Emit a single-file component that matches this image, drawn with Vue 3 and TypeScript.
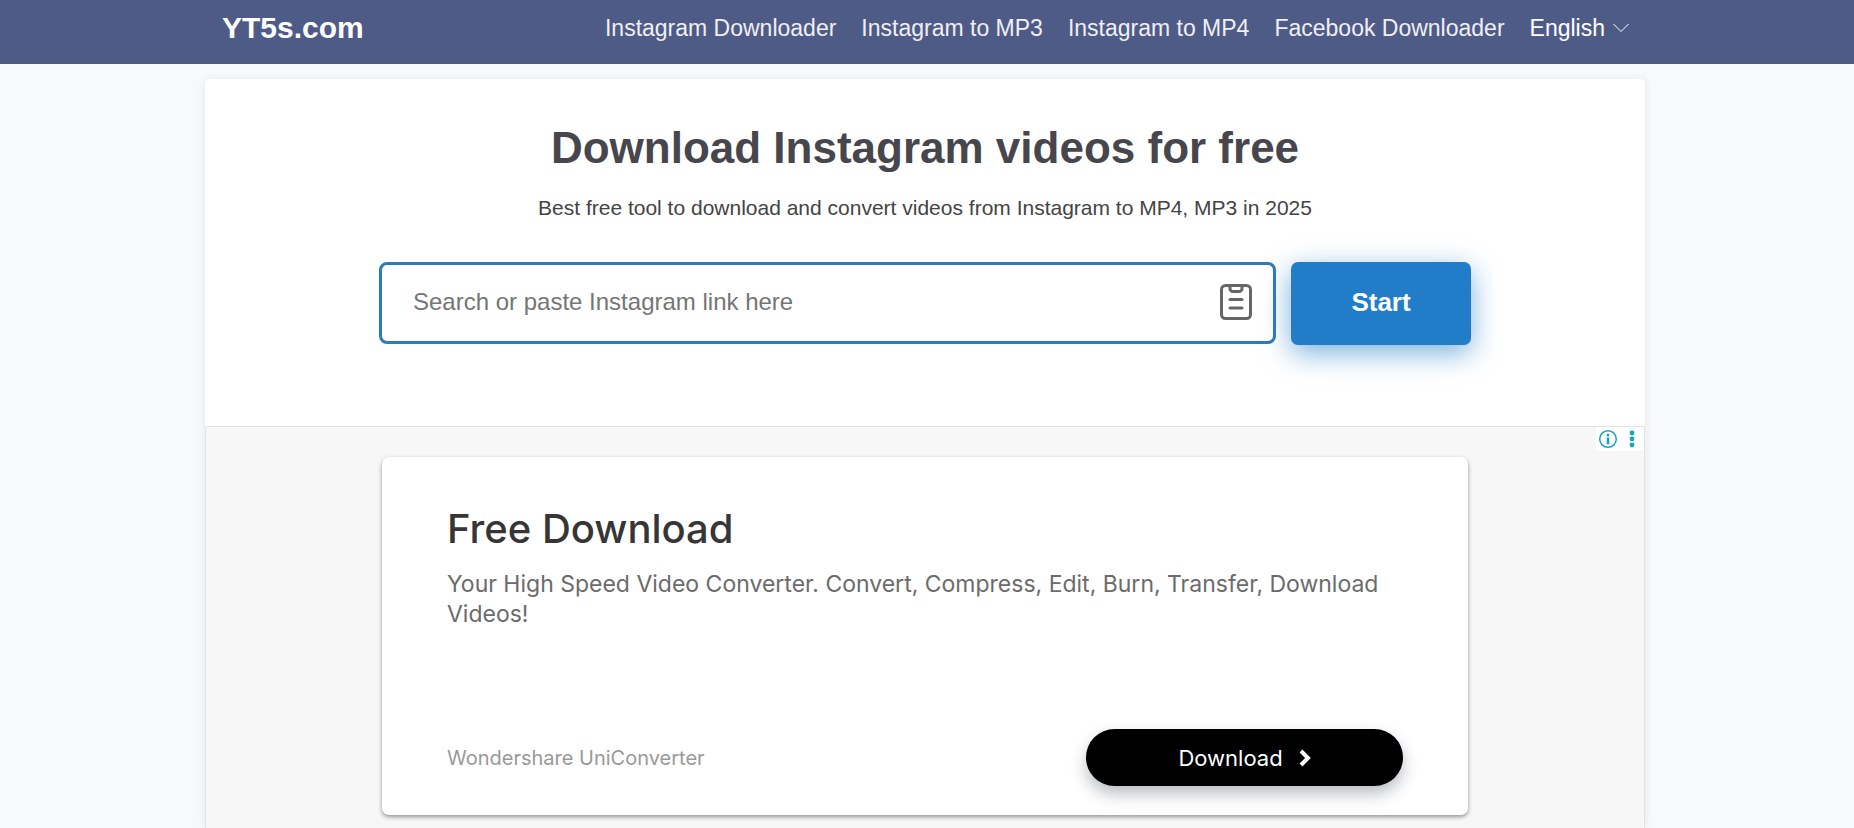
<script setup lang="ts">
import { ref } from 'vue'

interface NavLink {
  label: string
  href: string
}

const links: NavLink[] = [
  { label: 'Instagram Downloader', href: '#downloader' },
  { label: 'Instagram to MP3', href: '#mp3' },
  { label: 'Instagram to MP4', href: '#mp4' },
  { label: 'Facebook Downloader', href: '#facebook' },
]

const query = ref('')
</script>

<template>
  <div class="page">
    <header class="header">
      <div class="wrap header-row">
        <a class="logo" href="#home">YT5s.com</a>
        <nav class="nav">
          <a v-for="link in links" :key="link.href" class="nav-link" :href="link.href">{{ link.label }}</a>
          <button class="language" type="button">
            English
            <svg class="caret" viewBox="0 0 16 10" aria-hidden="true"><path d="M.5 1 8 8.500 15.500 1" /></svg>
          </button>
        </nav>
      </div>
    </header>

    <main class="main">
      <div class="wrap panel">
        <section class="hero">
          <h1 class="title">Download Instagram videos for free</h1>
          <p class="subtitle">Best free tool to download and convert videos from Instagram to MP4, MP3 in 2025</p>
          <form class="search" @submit.prevent>
            <div class="field">
              <input v-model="query" class="input" type="text" aria-label="Instagram link" placeholder="Search or paste Instagram link here" />
              <button class="paste" type="button" aria-label="Paste">
                <svg viewBox="0 0 32 36" aria-hidden="true">
                  <rect x="1.500" y="1.500" width="29" height="33" rx="4" />
                  <path d="M10 2v2.500a3 3 0 0 0 3 3h6a3 3 0 0 0 3-3V2M10 15.500h12M10 24h12" />
                </svg>
              </button>
            </div>
            <button class="start" type="submit">Start</button>
          </form>
        </section>

        <section class="ad" aria-label="Advertisement">
          <div class="ad-tools">
            <button class="ad-tool" type="button" aria-label="About this ad">
              <svg viewBox="0 0 24 24" aria-hidden="true">
                <circle class="ring" cx="12" cy="12" r="8.300" />
                <circle cx="12" cy="8" r="1.500" />
                <path d="M10.700 10.500h2.600v6.800h-2.600z" />
              </svg>
            </button>
            <button class="ad-tool" type="button" aria-label="Ad options">
              <svg viewBox="0 0 24 24" aria-hidden="true">
                <circle cx="12" cy="6" r="2.400" />
                <circle cx="12" cy="12" r="2.400" />
                <circle cx="12" cy="18" r="2.400" />
              </svg>
            </button>
          </div>
          <article class="card">
            <h2 class="card-title">Free Download</h2>
            <p class="card-text">Your High Speed Video Converter. Convert, Compress, Edit, Burn, Transfer, Download Videos!</p>
            <div class="card-foot">
              <span class="brand">Wondershare UniConverter</span>
              <a class="download" href="#download">
                Download
                <svg class="chevron" viewBox="0 0 12 18" aria-hidden="true"><path d="M2 2 9 9 2 16" /></svg>
              </a>
            </div>
          </article>
        </section>
      </div>
    </main>
  </div>
</template>

<style>
body {
  margin: 0;
  background: #f8f9fb;
}
</style>

<style scoped>
.page {
  height: 100vh;
  overflow: hidden;
  display: flex;
  flex-direction: column;
  font-family: "Liberation Sans", Arial, sans-serif;
  color: #444;
}

.page * {
  box-sizing: border-box;
}

button,
input {
  font: inherit;
}

.wrap {
  width: 100%;
  max-width: 1440px;
  margin: 0 auto;
}

.header {
  flex: none;
  padding-right: 4px;
  background: #4f5b87;
}

.header-row {
  display: flex;
  align-items: center;
  justify-content: space-between;
  height: 64px;
  padding: 0 16px 8px 17px;
}

.logo {
  color: #fff;
  font-size: 30px;
  font-weight: 700;
  text-decoration: none;
}

.nav {
  display: flex;
  align-items: center;
  gap: 25px;
  font-size: 23px;
}

.nav-link {
  color: #eeeff5;
  text-decoration: none;
}

.language {
  display: flex;
  align-items: center;
  gap: 8px;
  padding: 0;
  border: 0;
  background: none;
  color: #fff;
}

.caret {
  width: 16px;
  height: 10px;
  fill: none;
  stroke: #fff;
}

.main {
  flex: 1 0 auto;
  display: flex;
  padding: 15px 4px 0 0;
}

.panel {
  display: flex;
  flex-direction: column;
  border-radius: 5px 5px 0 0;
  background: #fff;
  box-shadow: 0 0 10px rgba(0, 0, 0, 0.08);
}

.hero {
  padding: 45px 24px 81px;
  text-align: center;
}

.title {
  margin: 0;
  color: #47464d;
  font-size: 44px;
  line-height: 48px;
}

.subtitle {
  margin: 23px 0 0;
  font-size: 21px;
  line-height: 26px;
}

.search {
  display: flex;
  gap: 15px;
  max-width: 1092px;
  margin: 41px auto 0;
}

.field {
  flex: 1;
  display: flex;
  align-items: center;
  height: 82px;
  padding: 0 21px 2px 31px;
  border: 3px solid #2d7abd;
  border-radius: 8px;
}

.input {
  flex: 1;
  min-width: 0;
  padding: 0;
  border: 0;
  outline: 0;
  background: none;
  font-size: 24px;
  color: #444;
}

.input::placeholder {
  color: #757575;
  opacity: 1;
}

.paste {
  display: flex;
  padding: 0;
  border: 0;
  background: none;
}

.paste svg {
  width: 32px;
  height: 36px;
  fill: none;
  stroke: #666;
  stroke-width: 3;
  stroke-linecap: round;
}

.start {
  width: 180px;
  height: 83px;
  padding: 0 0 2px;
  border: 0;
  border-radius: 7px;
  background: #217dc7;
  box-shadow: 0 8px 28px rgba(33, 125, 199, 0.6);
  color: #fff;
  font-size: 26px;
  font-weight: 700;
}

.ad {
  flex: 1;
  position: relative;
  padding: 30px 24px 12px;
  border: 1px solid #e3e3e3;
  border-bottom: 0;
  background: #f7f7f7;
}

.ad-tools {
  position: absolute;
  top: 0;
  right: 0;
  display: flex;
  background: #fff;
}

.ad-tool {
  display: flex;
  padding: 0;
  border: 0;
  background: none;
}

.ad-tool svg {
  width: 24px;
  height: 24px;
  fill: #16a5bd;
}

.ad-tool .ring {
  fill: none;
  stroke: #16a5bd;
  stroke-width: 1.5;
}

.card {
  display: flex;
  flex-direction: column;
  max-width: 1086px;
  min-height: 358px;
  margin: 0 auto;
  padding: 48px 65px 29px;
  border-radius: 7px;
  background: #fff;
  box-shadow: 0 2px 4px rgba(0, 0, 0, 0.4);
  font-family: "Google Sans", Inter, sans-serif;
}

.card-title {
  margin: 0;
  color: #363636;
  font-size: 40px;
  font-weight: 500;
  line-height: 48px;
}

.card-text {
  margin: 16px 0 0;
  color: #6b6b6b;
  font-size: 23px;
  line-height: 30px;
}

.card-foot {
  display: flex;
  align-items: center;
  justify-content: space-between;
  margin-top: auto;
}

.brand {
  color: #999;
  font-size: 20px;
}

.download {
  display: flex;
  align-items: center;
  justify-content: center;
  gap: 16px;
  width: 317px;
  height: 57px;
  border-radius: 29px;
  background: #000;
  box-shadow: 0 8px 16px rgba(30, 40, 70, 0.3);
  color: #fff;
  font-size: 22px;
  text-decoration: none;
}

.chevron {
  width: 12px;
  height: 18px;
  fill: none;
  stroke: #fff;
  stroke-width: 4;
}
</style>
